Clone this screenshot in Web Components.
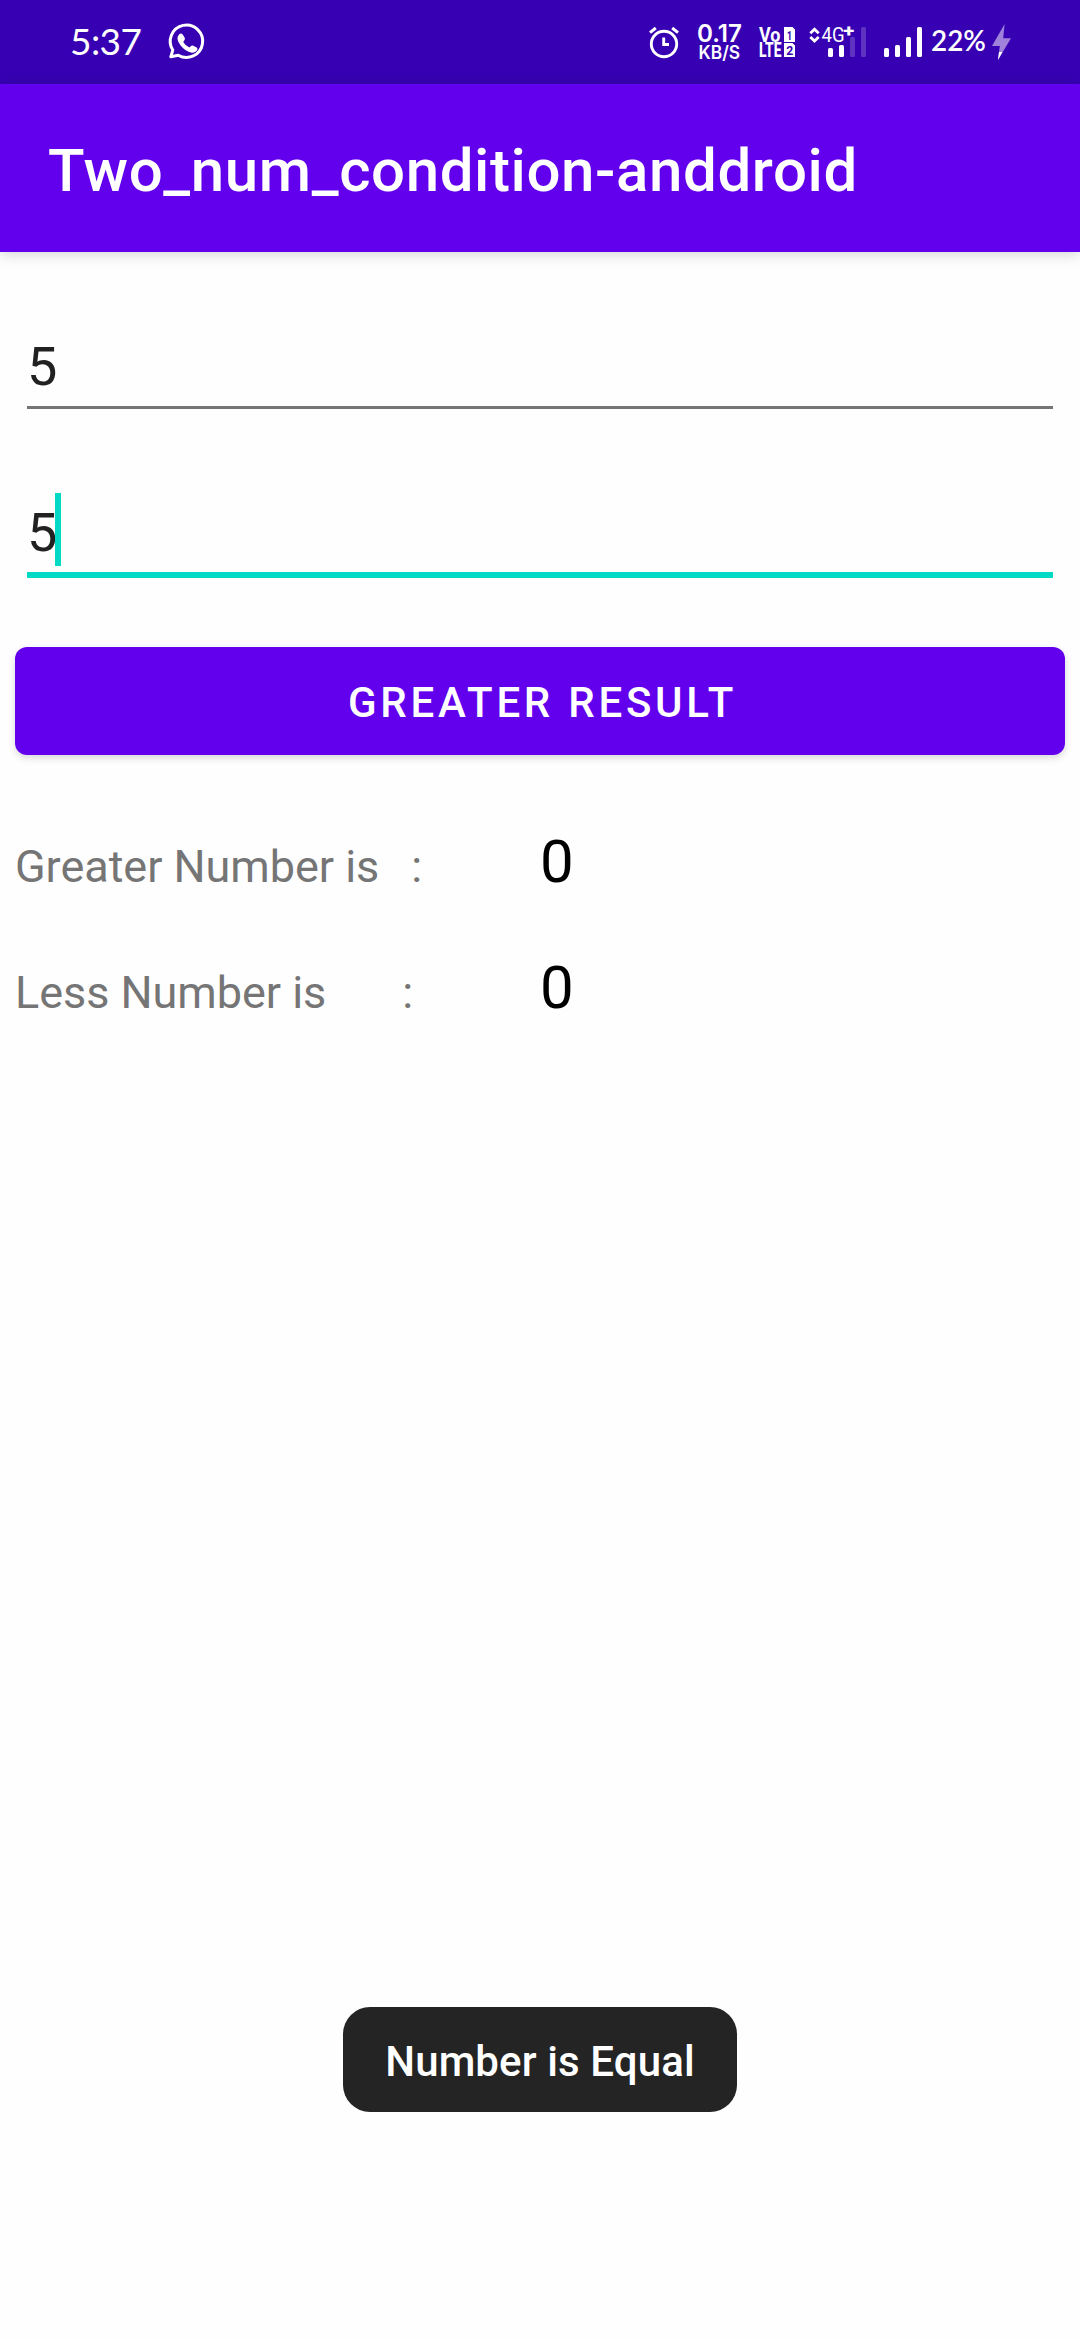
<!DOCTYPE html>
<html lang="en">
<head>
<meta charset="utf-8">
<title>Two_num_condition-anddroid</title>
<style>
body { margin: 0; background: #fefefe; font-family: Roboto, "Liberation Sans", sans-serif; }
</style>
</head>
<body>
<phone-screen>
  <status-bar slot="status"></status-bar>
  <app-bar slot="bar">Two_num_condition-anddroid</app-bar>
  <number-field>5</number-field>
  <number-field focused>5</number-field>
  <action-button>GREATER RESULT</action-button>
  <result-row style="--colon-left:32px"><span slot="label">Greater Number is</span><span slot="value">0</span></result-row>
  <result-row style="--colon-left:76px"><span slot="label">Less Number is</span><span slot="value">0</span></result-row>
  <toast-message slot="toast">Number is Equal</toast-message>
</phone-screen>
<script>
const define = (name, html) => customElements.define(name, class extends HTMLElement {
  constructor() {
    super();
    this.attachShadow({ mode: "open" }).innerHTML = html;
  }
});

define("phone-screen", `
<style>
:host { display: flex; flex-direction: column; width: 1080px; height: 2340px; overflow: hidden; position: relative; background: #fefefe; }
main { display: flex; flex-direction: column; padding: 75px 15px 0; }
.toast { position: absolute; left: 0; right: 0; top: 2007px; display: flex; justify-content: center; }
</style>
<slot name="status"></slot>
<slot name="bar"></slot>
<main><slot></slot></main>
<div class="toast"><slot name="toast"></slot></div>`);

define("status-bar", `
<style>
:host { display: flex; height: 84px; background: #3700b3; justify-content: space-between; padding: 0 60px 0 60px; box-sizing: border-box; flex: none; }
div { display: flex; }
svg { display: block; height: 84px; fill: #fff; }
text { font-family: Lato, sans-serif; }
.line { fill: none; stroke: #fff; }
.dim { fill: #fff; opacity: .2; }
</style>
<div>
  <svg width="95" viewBox="60 0 95 84"><text x="70" y="55" font-size="37" textLength="72">5:37</text></svg>
  <svg width="60" viewBox="155 0 60 84">
    <path class="line" stroke-width="3" stroke-linejoin="round" d="M170.8 56.8 L172.8 50 A16.2 16.2 0 1 1 178.2 55.2 Z"/>
    <path d="M179.3 34.2 q1.8-1.5 3.4.4 l2 3.1 q.6 1.4-.3 2.6 l-1.2 1.7 q2.2 3.8 6.2 5.4 l1.6-1.5 q1-.8 2.3-.2 l3.4 1.9 q1.6 1.1.3 2.8 q-2.6 3-6 2.2 q-5.2-1.2-9-5.5 q-4.6-5.1-4.5-9 q.1-2.4 1.8-3.9z"/>
  </svg>
</div>
<div>
  <svg width="45" viewBox="645 0 45 84">
    <circle class="line" cx="664" cy="44" r="12.7" stroke-width="2.9"/>
    <path class="line" stroke-width="3" d="M650 32.6l5.8-4.6M678 32.6l-5.8-4.6"/>
    <path class="line" stroke-width="2.9" d="M663.7 37.5v7h5.3"/>
  </svg>
  <svg width="60" viewBox="690 0 60 84">
    <text x="697" y="42" font-size="24" textLength="45" lengthAdjust="spacingAndGlyphs" style="font-family:Inter;font-weight:600">0.17</text>
    <text x="698.5" y="59" font-size="18.5" textLength="41.5" lengthAdjust="spacingAndGlyphs" style="font-family:Inter;font-weight:600">KB/S</text>
  </svg>
  <svg width="53" viewBox="750 0 53 84">
    <text x="759" y="41.5" font-size="19.5" textLength="21.5" lengthAdjust="spacingAndGlyphs" style="font-family:Roboto;font-weight:700">Vo</text>
    <text x="759" y="57" font-size="19.5" textLength="22.5" lengthAdjust="spacingAndGlyphs" style="font-family:Roboto;font-weight:800">LTE</text>
    <path d="M784 27h8.5l2.5 2.5V42h-11zM784 43h8.5l2.5 2.5V57h-11z"/>
    <text x="787" y="39.5" font-size="13" fill="#3700b3" textLength="5" lengthAdjust="spacingAndGlyphs" style="font-family:Roboto;font-weight:800">1</text>
    <text x="786.3" y="54.8" font-size="13" fill="#3700b3" textLength="7" lengthAdjust="spacingAndGlyphs" style="font-family:Roboto;font-weight:700">2</text>
  </svg>
  <svg width="72" viewBox="803 0 72 84">
    <path class="line" stroke-width="2.8" d="M810.3 33.3l4.2-4 4.2 4M810.3 37l4.2 4 4.2-4"/>
    <text x="821.5" y="42" font-size="19.5" textLength="23" lengthAdjust="spacingAndGlyphs" style="font-family:Roboto;font-weight:400">4G</text>
    <text x="843.2" y="35.7" font-size="16" textLength="11" lengthAdjust="spacingAndGlyphs" style="font-family:Roboto;font-weight:800">+</text>
    <rect x="828" y="48" width="5" height="9" rx="1.5"/><rect x="839" y="45" width="5" height="12" rx="1.5"/>
    <rect class="dim" x="850" y="37" width="5" height="20" rx="1.5"/><rect class="dim" x="861" y="27" width="5" height="30" rx="1.5"/>
  </svg>
  <svg width="53" viewBox="875 0 53 84">
    <rect x="884" y="48" width="5" height="9" rx="1.5"/><rect x="895" y="45" width="5" height="12" rx="1.5"/>
    <rect x="906" y="37" width="5" height="20" rx="1.5"/><rect x="917" y="27" width="5" height="30" rx="1.5"/>
  </svg>
  <svg width="60" viewBox="928 0 60 84"><text x="931" y="51" font-size="28.5" textLength="55" lengthAdjust="spacingAndGlyphs" style="font-weight:600">22%</text></svg>
  <svg width="32" viewBox="988 0 32 84">
    <path fill="#9f80da" d="M1004.6 24 L992 46 h7.8 L998 60 L1011 38.3 h-7.8z"/>
    <path d="M999 52h3.4L998 60z"/>
  </svg>
</div>`);

define("app-bar", `
<style>
:host { display: flex; height: 168px; flex: none; align-items: center; padding: 5px 0 0 48px; box-sizing: border-box; background: #6200ee; color: #fff; font-size: 60px; font-weight: 500; line-height: 70px; letter-spacing: .6px; box-shadow: 0 2px 14px rgba(0,0,0,.17); white-space: nowrap; }
</style><slot></slot>`);

define("number-field", `
<style>
:host { display: flex; flex-direction: column; height: 166px; box-sizing: border-box; padding: 3px 12px 0; color: #212121; font-size: 54px; line-height: 73px; }
.text { display: flex; align-items: flex-start; height: 76px; }
i { display: none; width: 6px; height: 73px; background: #03dac5; margin: -3px 0 0 -2px; }
.rule { height: 3px; background: #757575; }
:host([focused]) .rule { height: 6px; background: #03dac5; }
:host([focused]) i { display: block; }
</style>
<div class="text"><slot></slot><i></i></div><div class="rule"></div>`);

define("action-button", `
<style>
:host { display: block; margin: -12px 0 0; }
button { display: block; width: 100%; height: 108px; border: 0; border-radius: 12px; padding: 3px 0 0 5px; background: #6200ee; color: #fff; font: 500 42px/50px Roboto, sans-serif; letter-spacing: 3.75px; box-shadow: 0 3px 7px rgba(0,0,0,.15); }
</style><button><slot></slot></button>`);

define("result-row", `
<style>
:host { display: flex; align-items: baseline; height: 126px; box-sizing: border-box; padding-top: 72px; line-height: 70px; }
.label { display: flex; width: 525px; color: #757575; font-size: 45px; letter-spacing: -.04px; white-space: nowrap; }
.colon { margin-left: var(--colon-left); }
.value { color: #000; font-size: 60px; }
</style>
<div class="label"><slot name="label"></slot><span class="colon">:</span></div><div class="value"><slot name="value"></slot></div>`);

define("toast-message", `
<style>
:host { display: flex; align-items: center; justify-content: center; width: 394px; height: 105px; padding-top: 4px; box-sizing: border-box; border-radius: 27px; background: #242424; color: #fff; font-size: 42px; font-weight: 500; letter-spacing: .12px; line-height: 50px; white-space: nowrap; }
</style><slot></slot>`);
</script>
</body>
</html>
